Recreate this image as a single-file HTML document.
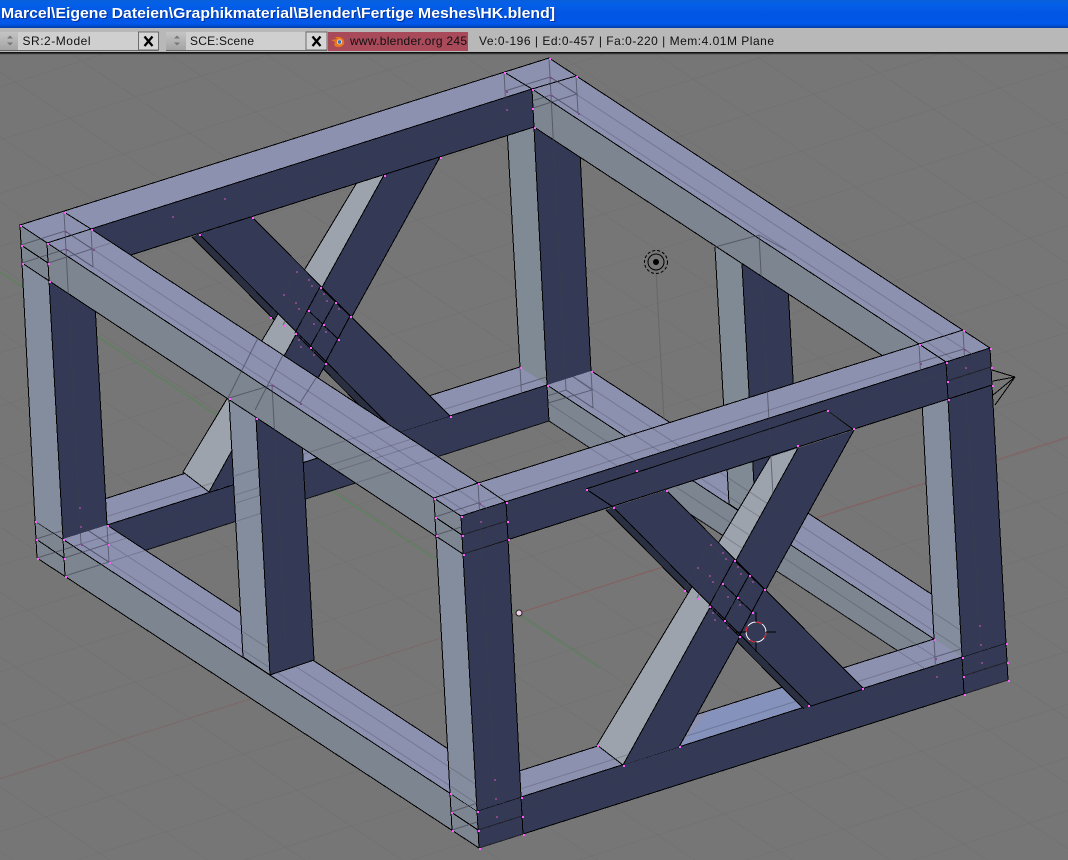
<!DOCTYPE html>
<html lang="de"><head><meta charset="utf-8"><title>Blender HK.blend</title>
<style>
html,body{margin:0;padding:0;width:1068px;height:860px;overflow:hidden;background:#747474}
svg{display:block;position:absolute;left:0;top:0}
text{font-family:"Liberation Sans",sans-serif}
</style></head><body>
<svg width="1068" height="860" viewBox="0 0 1068 860" xmlns="http://www.w3.org/2000/svg">
<defs>
<linearGradient id="tb" x1="0" y1="0" x2="0" y2="1">
<stop offset="0" stop-color="#0a5ed8"/><stop offset=".12" stop-color="#0560e8"/><stop offset=".55" stop-color="#0055e4"/><stop offset=".85" stop-color="#0058ea"/><stop offset=".95" stop-color="#0048c0"/><stop offset="1" stop-color="#003ca8"/>
</linearGradient>
<linearGradient id="bt" x1="0" y1="0" x2="0" y2="1"><stop offset="0" stop-color="#c4c4c4"/><stop offset="1" stop-color="#a4a4a4"/></linearGradient>
<pattern id="grid" patternUnits="userSpaceOnUse" width="100" height="100" patternTransform="translate(519 613) matrix(.66 -.21 .54 .36 0 0)">
<path d="M0 0H100M0 0V100" stroke="#6c6c6c" stroke-width="1.4" fill="none"/>
</pattern>
</defs>

<!-- ground -->
<rect width="1068" height="860" fill="#767676"/>
<rect y="52" width="1068" height="808" fill="url(#grid)"/>
<path d="M0 272L600 668" stroke="#4d8a4d" stroke-opacity=".8" fill="none"/>
<path d="M519 613L1068 437" stroke="#8c5a5a" stroke-opacity=".8" fill="none"/>
<path d="M0 779L519 613" stroke="#8c5a5a" stroke-opacity=".45" fill="none"/>

<g shape-rendering="crispEdges">
<!-- bottom ring inner sides -->
<polygon points="107,525 547,385 549,421 109,562" fill="#343a55"/>
<polygon points="547,385 934,639 936,676 549,421" fill="#7d8590"/>
<path fill="none" stroke="#000" d="M547 385L549 421M549 421L109 562M549 421L936 676"/>
<!-- bottom ring top -->
<path fill-rule="evenodd" d="M35 521L564 353L1006 643L477 811ZM107 525L494 779L934 639L547 385Z" fill="#8d91b0"/>
<polygon points="680,746 808,705 785,687 708,712" fill="#8492bc"/>
<!-- bottom outer sides -->
<polygon points="35,521 477,811 479,848 37,558" fill="#7d8590"/>
<polygon points="477,811 1006,643 1008,680 479,848" fill="#343a55"/>
<path fill="none" stroke="#000" d="M35 521L564 353L1006 643L477 811ZM107 525L547 385L934 639L494 779ZM37 558L479 848L1008 680L1006 643M477 811L479 848M35 521L37 558M36 539L64 558M451 812L478 830L522 816M963 676L1007 662M450 793L452 830M521 797L523 834M962 657L964 694M63 539L65 576"/>

<!-- back posts -->
<polygon points="506,109 534,127 547,385 520,367" fill="#808a94"/>
<polygon points="534,127 578,113 591,371 547,385" fill="#343a55"/>
<path fill="none" stroke="#000" d="M506 109L520 367M534 127L547 385M578 113L591 371"/>
<polygon points="715,247 742,264 756,522 729,504" fill="#808a94"/>
<polygon points="742,264 786,250 800,508 756,522" fill="#343a55"/>
<path fill="none" stroke="#000" d="M715 247L729 504L756 522L800 508L786 250M742 264L756 522"/>
<!-- left post -->
<polygon points="22,263 49,281 63,539 35,521" fill="#848d9e"/>
<polygon points="49,281 93,267 107,525 63,539" fill="#343a55"/>
<path fill="none" stroke="#000" d="M22 263L35 521M49 281L63 539M93 267L107 525"/>

<!-- back braces -->
<polygon points="192,237 199,234 397,433 390,436" fill="#2a2f42"/>
<path fill="none" stroke="#000" d="M192 237L390 436"/>
<polygon points="356,184 384,175 209,492 183,472" fill="#9da3ac"/>
<polygon points="384,175 440,157 265,474 209,492" fill="#343a55"/>
<path fill="none" stroke="#000" d="M356 184L183 472L209 492L384 175M440 157L265 474"/>
<polygon points="199,234 252,217 450,416 397,433" fill="#343a55"/>
<path fill="none" stroke="#000" d="M199 234L397 433M252 217L450 416"/>

<!-- top ring inner sides -->
<polygon points="91,229 532,89 534,127 93,267" fill="#343a55"/>
<polygon points="532,89 919,344 921,381 534,127" fill="#7d8590"/>
<path fill="none" stroke="#000" d="M93 267L534 127L921 381M532 89L534 127"/>

<!-- front posts and mid post -->
<polygon points="229,398 256,418 270,675 243,657" fill="#848d9e"/>
<polygon points="256,418 300,403 314,660 270,675" fill="#343a55"/>
<path fill="none" stroke="#000" d="M229 398L243 657L270 675L314 660L300 403M256 418L270 675"/>
<polygon points="436,535 463,554 477,811 450,793" fill="#848d9e"/>
<polygon points="463,554 508,539 521,797 477,811" fill="#343a55"/>
<path fill="none" stroke="#000" d="M436 535L450 793M463 554L477 811M508 539L521 797"/>
<polygon points="921,381 948,399 962,657 934,639" fill="#848d9e"/>
<polygon points="948,399 992,385 1006,643 962,657" fill="#343a55"/>
<path fill="none" stroke="#000" d="M921 381L934 639M948 399L962 657M992 385L1006 643"/>

<!-- top ring -->
<path fill-rule="evenodd" d="M20 225L549 58L990 348L461 516ZM91 229L478 483L919 344L532 89Z" fill="#8d91b0"/>
<polygon points="20,225 461,516 463,554 22,263" fill="#7d8590"/>

<!-- front braces -->
<polygon points="606,510 613,507 811,706 804,709" fill="#2a2f42"/>
<path fill="none" stroke="#000" d="M606 510L804 709"/>
<polygon points="770,457 798,448 623,765 597,745" fill="#9da3ac"/>
<polygon points="798,448 854,430 679,747 623,765" fill="#343a55"/>
<path fill="none" stroke="#000" d="M770 457L597 745L623 765L798 448M854 430L679 747"/>
<polygon points="613,507 666,490 864,689 811,706" fill="#343a55"/>
<path fill="none" stroke="#000" d="M613 507L811 706M666 490L864 689L811 706"/>

<!-- top front dark side -->
<polygon points="461,516 990,348 992,385 463,554" fill="#343a55"/>
<path fill="none" stroke="#000" d="M20 225L549 58L990 348L461 516ZM91 229L532 89L919 344L478 483ZM64 212L91 229M47 243L91 229M504 72L532 89L576 76M963 330L919 344L946 362M434 498L478 483L506 502M47 243L49 281M20 225L22 263M22 263L463 554L992 385L990 348M461 516L463 554M21 245L48 263M435 517L462 535L507 521M947 381L991 367M434 498L436 536M506 502L508 539M946 362L948 399"/>
<!-- front brace top edges over dark side -->
<path fill="none" stroke="#000" d="M586 489L613 507M586 489L827 410M827 410L854 430"/>

<!-- crossing detail, black -->
<path fill="none" stroke="#000" d="M320 287L295 333M335 302L310 347M350 316L325 363M308 310L338 339M295 333L325 363M320 287L350 316M734 560L709 606M749 575L724 620M764 589L739 636M722 583L752 612M709 606L739 636M734 560L764 589"/>
<!-- camera -->
<path fill="none" stroke="#000" d="M992 370L1015 377L993 381M1015 377L993 395M1015 377L995 405"/>
</g>

<!-- hidden wires: corners -->
<g fill="none" stroke="#3c3e4c" stroke-opacity=".6" stroke-width="1">
<path d="M64 212L66 250M91 229L93 267M21 245L65 231L92 249L48 263M22 263L66 249L93 267M66 249L79 507"/>
<path d="M549 58L551 95M504 72L506 109M576 76L578 113M505 91L550 77L577 94L533 108M506 109L551 95L578 113M551 95L564 353"/>
<path d="M963 330L965 367M919 344L921 381M920 362L964 349L991 367L947 381M921 381L965 367L992 385M965 367L979 625"/>
<path d="M478 483L480 521M435 517L478 503L507 521L462 535M436 535L480 521L508 539L463 554M480 521L494 779"/>
<path d="M36 539L80 525L108 544L64 558M37 558L81 544L109 562L65 576M79 507L81 544M107 525L109 562"/>
<path d="M564 353L566 390M520 367L522 404M591 371L593 408M521 385L565 371L592 390L548 403M522 404L566 390L593 408"/>
<path d="M935 657L980 643L1007 662L963 676M936 676L981 662L1008 680L964 694M979 625L981 662M934 639L936 676"/>
<path d="M451 812L495 797L522 816L478 830M452 830L496 816L523 834L479 848M494 779L496 816"/>
<path d="M229 398L272 385L300 403M272 385L286 650M258 338L228 398M283 355L255 410M316 378L300 403M172 216L224 198L252 217M172 216L199 234"/>
<path d="M715 247L759 235L786 250M759 235L773 495"/>
<path d="M797 445L827 410L853 428M636 470L664 489"/>
<path d="M296 271L270 317M308 279L283 325M311 285L298 339M323 293L300 346M326 300L313 354M338 308L325 331M283 294L313 323M295 302L325 331M296 271L338 308"/>
<path d="M710 544L684 590M722 552L697 598M725 558L712 612M737 566L714 619M740 573L727 627M752 581L739 604M697 567L727 596M709 575L739 604M710 544L752 581"/>
<path d="M656 270L664 420" stroke="#5e5e5e"/>
</g>
<!-- hidden wires: long beam lines -->
<g fill="none" stroke="#3c3e4c" stroke-opacity=".3" stroke-width="1">
<path d="M65 231L478 503M66 249L480 521M92 249L533 108M550 77L964 349M551 95L965 367M478 503L920 362M480 521L921 381"/>
<path d="M80 525L495 797M81 544L496 816M108 544L548 403M109 562L549 421M80 525L521 385M81 544L522 404M565 371L980 643M566 390L981 662M548 403L935 657M549 421L936 676M495 797L935 657M496 816L936 676"/>
</g>

<!-- vertices: dim -->
<path fill="#84488e" d="M65 231h2v2h-2zM66 249h2v2h-2zM93 249h2v2h-2zM506 91h2v2h-2zM506 109h2v2h-2zM550 77h2v2h-2zM551 95h2v2h-2zM578 113h2v2h-2zM479 503h2v2h-2zM480 521h2v2h-2zM964 349h2v2h-2zM965 367h2v2h-2zM920 363h2v2h-2zM80 526h2v2h-2zM81 544h2v2h-2zM79 507h2v2h-2zM495 798h2v2h-2zM496 816h2v2h-2zM494 779h2v2h-2zM980 644h2v2h-2zM981 662h2v2h-2zM979 625h2v2h-2zM935 658h2v2h-2zM936 676h2v2h-2zM296 271h2v2h-2zM308 279h2v2h-2zM311 285h2v2h-2zM323 293h2v2h-2zM326 300h2v2h-2zM338 308h2v2h-2zM283 294h2v2h-2zM295 302h2v2h-2zM298 308h2v2h-2zM313 323h2v2h-2zM325 331h2v2h-2zM298 339h2v2h-2zM300 346h2v2h-2zM313 354h2v2h-2zM710 544h2v2h-2zM722 552h2v2h-2zM725 558h2v2h-2zM737 566h2v2h-2zM740 573h2v2h-2zM752 581h2v2h-2zM697 567h2v2h-2zM709 575h2v2h-2zM712 581h2v2h-2zM727 596h2v2h-2zM739 604h2v2h-2zM712 612h2v2h-2zM714 619h2v2h-2zM727 627h2v2h-2zM172 216h2v2h-2zM224 198h2v2h-2zM272 385h2v2h-2zM300 403h2v2h-2z"/>
<!-- vertices: bright -->
<path fill="#ff5cff" d="M20 225h2v2h-2zM64 212h2v2h-2zM91 229h2v2h-2zM47 243h2v2h-2zM21 245h2v2h-2zM48 263h2v2h-2zM22 263h2v2h-2zM49 281h2v2h-2zM504 72h2v2h-2zM549 58h2v2h-2zM576 76h2v2h-2zM532 89h2v2h-2zM532 108h2v2h-2zM534 127h2v2h-2zM919 344h2v2h-2zM963 330h2v2h-2zM990 348h2v2h-2zM946 362h2v2h-2zM947 381h2v2h-2zM948 399h2v2h-2zM991 367h2v2h-2zM992 385h2v2h-2zM434 498h2v2h-2zM478 483h2v2h-2zM506 502h2v2h-2zM461 516h2v2h-2zM435 517h2v2h-2zM436 535h2v2h-2zM462 535h2v2h-2zM463 554h2v2h-2zM507 521h2v2h-2zM508 539h2v2h-2zM35 521h2v2h-2zM36 539h2v2h-2zM37 558h2v2h-2zM63 539h2v2h-2zM64 558h2v2h-2zM65 576h2v2h-2zM107 525h2v2h-2zM108 544h2v2h-2zM109 562h2v2h-2zM450 793h2v2h-2zM451 812h2v2h-2zM452 830h2v2h-2zM477 811h2v2h-2zM478 830h2v2h-2zM479 848h2v2h-2zM521 797h2v2h-2zM522 816h2v2h-2zM523 834h2v2h-2zM934 639h2v2h-2zM962 657h2v2h-2zM963 676h2v2h-2zM964 694h2v2h-2zM1006 643h2v2h-2zM1007 662h2v2h-2zM1008 680h2v2h-2zM520 367h2v2h-2zM547 385h2v2h-2zM591 371h2v2h-2zM199 234h2v2h-2zM252 217h2v2h-2zM450 416h2v2h-2zM384 175h2v2h-2zM440 157h2v2h-2zM320 287h2v2h-2zM335 302h2v2h-2zM350 316h2v2h-2zM308 310h2v2h-2zM323 324h2v2h-2zM338 339h2v2h-2zM295 333h2v2h-2zM310 347h2v2h-2zM325 363h2v2h-2zM270 317h2v2h-2zM283 325h2v2h-2zM229 398h2v2h-2zM256 418h2v2h-2zM734 560h2v2h-2zM749 575h2v2h-2zM764 589h2v2h-2zM722 583h2v2h-2zM737 597h2v2h-2zM752 612h2v2h-2zM709 606h2v2h-2zM724 620h2v2h-2zM739 636h2v2h-2zM684 590h2v2h-2zM697 598h2v2h-2zM797 445h2v2h-2zM853 428h2v2h-2zM827 410h2v2h-2zM613 507h2v2h-2zM666 490h2v2h-2zM586 489h2v2h-2zM636 470h2v2h-2zM597 745h2v2h-2zM623 765h2v2h-2zM679 746h2v2h-2zM808 705h2v2h-2zM862 688h2v2h-2z"/>

<!-- lamp -->
<circle cx="656" cy="262" r="8" fill="none" stroke="#000"/>
<circle cx="656" cy="262" r="11.5" fill="none" stroke="#000" stroke-dasharray="3 2"/>
<circle cx="656" cy="262" r="3" fill="#000"/>
<!-- 3D cursor -->
<circle cx="756" cy="632" r="10" fill="none" stroke="#fff"/>
<circle cx="756" cy="632" r="10" fill="none" stroke="#e01010" stroke-dasharray="6.3 9.4"/>
<path d="M756 612V622M756 642V652M736 632H746M766 632H776" stroke="#000" fill="none" shape-rendering="crispEdges"/>
<!-- object origin -->
<circle cx="519" cy="613" r="3" fill="#f0d0e8" stroke="#222"/>

<!-- title bar -->
<rect width="1068" height="28" fill="url(#tb)"/>
<text x="2" y="19" font-size="15" font-weight="700" fill="#00309a" textLength="554" lengthAdjust="spacingAndGlyphs">Marcel\Eigene Dateien\Graphikmaterial\Blender\Fertige Meshes\HK.blend]</text>
<text x="1" y="18" font-size="15" font-weight="700" fill="#fff" textLength="554" lengthAdjust="spacingAndGlyphs">Marcel\Eigene Dateien\Graphikmaterial\Blender\Fertige Meshes\HK.blend]</text>

<!-- header -->
<rect y="28" width="1068" height="24" fill="#b8b8b8"/>
<rect y="52" width="1068" height="1.5" fill="#111"/>
<rect y="53.5" width="1068" height="1" fill="#555"/>

<rect x="0" y="32" width="18" height="18" fill="url(#bt)"/>
<path d="M10 35.500l-3 3h6zM10 45.500l-3-3h6z" fill="#777"/>
<rect x="18" y="32" width="120.500" height="18" fill="#cfcfcf"/>
<rect x="138.500" y="32" width="20" height="18" fill="#d6d6d6" stroke="#555" stroke-width=".8"/>
<path d="M144.500 36.500L152.500 46M152.500 36.500L144.500 46" stroke="#000" stroke-width="2.300" fill="none"/>
<path d="M0 50.500H158.500" stroke="#666"/>
<rect x="166" y="32" width="20" height="18" fill="url(#bt)"/>
<path d="M177 35.500l-3 3h6zM177 45.500l-3-3h6z" fill="#777"/>
<rect x="186" y="32" width="120" height="18" fill="#cfcfcf"/>
<rect x="306" y="32" width="21" height="18" fill="#d6d6d6" stroke="#555" stroke-width=".8"/>
<path d="M312.500 36.500L320.500 46M320.500 36.500L312.500 46" stroke="#000" stroke-width="2.300" fill="none"/>
<path d="M166 50.500H327" stroke="#666"/>
<rect x="328" y="32" width="140" height="19" fill="#a84a5a"/>
<path d="M331 40L337 39L335 37L340 37C343 38 345 41 344 44C342 48 336 48 334 45L335 42Z" fill="#e8761a"/>
<circle cx="339.500" cy="42" r="2.200" fill="#3f6fb0" stroke="#fff" stroke-width=".7"/>

<text x="22.500" y="45" font-size="12" fill="#111" textLength="68">SR:2-Model</text>
<text x="190" y="45" font-size="12" fill="#111" textLength="64">SCE:Scene</text>
<text x="350" y="45" font-size="12" fill="#111" textLength="117">www.blender.org 245</text>
<text x="479" y="45" font-size="12" fill="#111" textLength="295">Ve:0-196 | Ed:0-457 | Fa:0-220 | Mem:4.01M Plane</text>
</svg>
</body></html>
